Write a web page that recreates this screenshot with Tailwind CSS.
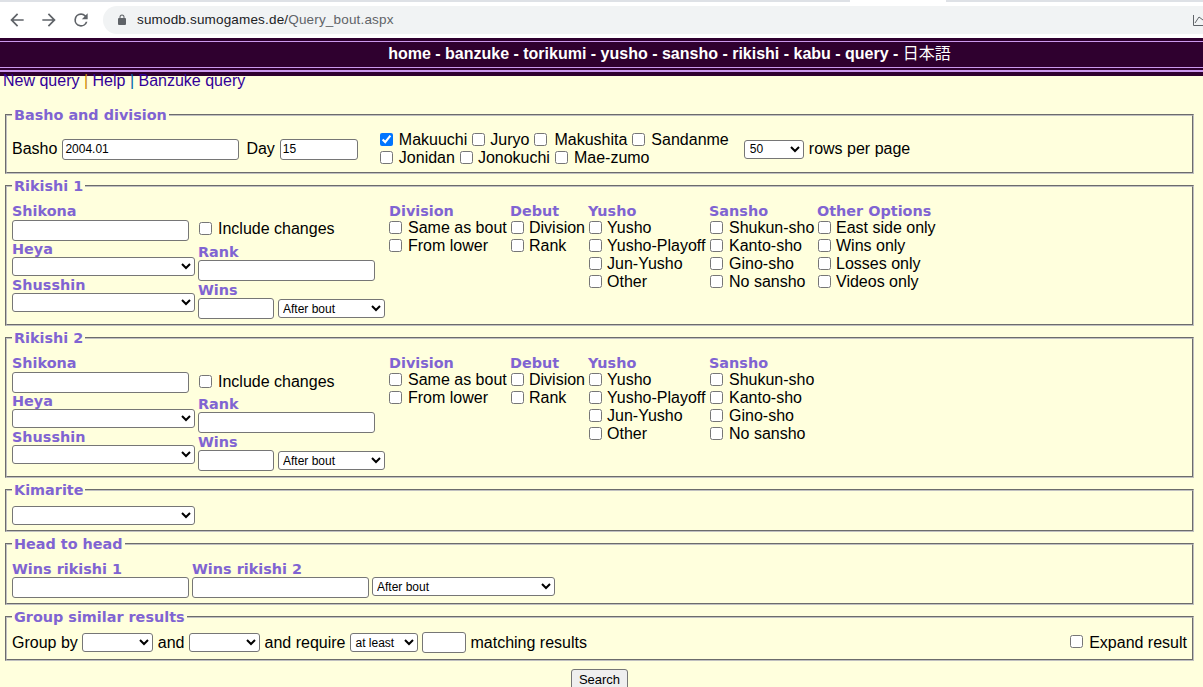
<!DOCTYPE html>
<html lang="en">
<head>
<meta charset="utf-8">
<title>Query bout</title>
<script src="https://cdn.jsdelivr.net/npm/@tailwindcss/browser@4"></script>
</head>
<body class="bg-[#ffffdd] text-black text-base leading-[18px] font-['Liberation_Sans','Noto_Sans_CJK_JP',sans-serif] overflow-hidden h-[687px]">
<div class="h-[38px] bg-white flex flex-col">
  <div class="h-[2px] flex"><div class="w-[850px] bg-[#dee1e6]"></div><div class="w-[96px] bg-white"></div><div class="flex-1 bg-[#dee1e6]"></div></div>
  <div class="flex items-center h-[36px] pb-[3px] pt-[3px]">
    <div class="w-[103px] flex items-center pl-[7px] gap-[12px] text-[#5f6368]">
      <svg class="w-[20px] h-[20px]" viewBox="0 0 24 24" fill="currentColor"><path d="M20 11H7.83l5.59-5.59L12 4l-8 8 8 8 1.41-1.41L7.83 13H20z"/></svg>
      <svg class="w-[20px] h-[20px]" viewBox="0 0 24 24" fill="currentColor"><path d="M12 4l-1.41 1.41L16.17 11H4v2h12.17l-5.58 5.59L12 20l8-8z"/></svg>
      <svg class="w-[20px] h-[20px]" viewBox="0 0 24 24" fill="currentColor"><path d="M17.65 6.35A7.96 7.96 0 0 0 12 4a8 8 0 1 0 7.73 10h-2.08A6 6 0 1 1 12 6c1.66 0 3.14.69 4.22 1.78L13 11h7V4z"/></svg>
    </div>
    <div class="flex-1 h-[28px] bg-[#f1f3f4] rounded-l-[14px] flex items-center pl-[13px] text-[13.5px] tracking-[0.17px]">
      <svg class="w-[12px] h-[12px] text-[#5f6368] mr-[9px]" viewBox="0 0 24 24" fill="currentColor"><path d="M18 8h-1V6a5 5 0 0 0-10 0v2H6a2 2 0 0 0-2 2v10a2 2 0 0 0 2 2h12a2 2 0 0 0 2-2V10a2 2 0 0 0-2-2zM9 6a3 3 0 0 1 6 0v2H9z"/></svg>
      <span class="text-[#202124]">sumodb.sumogames.de/</span><span class="text-[#5f6368]">Query_bout.aspx</span>
      <svg class="w-[10px] h-[14px] ml-auto text-[#5f6368]" viewBox="0 0 10 14" fill="none" stroke="currentColor"><path d="M0.5 2v10.5H10M2 10l4-6 4 3"/></svg>
    </div>
  </div>
</div>
<nav class="h-[38px] bg-[#2f002f] flex flex-col">
  <div class="mt-[3px] h-[1px] bg-[#cc99ee]"></div>
  <div class="h-[25px] pb-[2px] flex items-center justify-center pl-[136px] text-white font-bold text-base"><span>home - banzuke - torikumi - yusho - sansho - rikishi - kabu - query - <span class="font-normal">日本語</span></span></div>
  <div class="h-[1px] bg-[#cc99ee]"></div>
  <div class="mt-[2px] h-[2px] bg-[#cc99ee]"></div>
</nav>
<div class="pl-[3px] h-[33px] -mt-[4px] text-[#330099] leading-[18px] relative mb-[2px]">New query <span class="text-[#cc8800]">|</span> Help <span class="text-[#0066aa]">|</span> Banzuke query</div>

<form class="pl-[5px] pr-[9px] flex flex-col">
  <!-- Basho and division -->
  <fieldset class="border-2 [border-style:groove] border-[#c0c0c0] h-[67px] pl-[5px] pt-0">
    <legend class="px-[2px] font-['DejaVu_Sans',sans-serif] font-bold text-[14.4px] leading-[16px] text-[#8064d2]">Basho and division</legend>
    <div class="flex items-center h-[38px] mt-[7px]">
      <span>Basho</span>
      <input value="2004.01" class="ml-[5px] w-[177px] h-[21px] bg-white border border-[#767676] rounded-[3px] text-xs px-[2px]">
      <span class="ml-[7px]">Day</span>
      <input value="15" class="ml-[5px] w-[78px] h-[21px] bg-white border border-[#767676] rounded-[3px] text-xs px-[2px]">
      <div class="ml-[22px] w-[364px] flex flex-col">
        <div class="flex items-center h-[18px]"><input type="checkbox" checked class="mb-[2px] w-[13px] h-[13px] accent-[#0075ff]"><span class="ml-[6px]">Makuuchi</span><input type="checkbox" class="mb-[2px] ml-[5px] w-[13px] h-[13px]"><span class="ml-[5px]">Juryo</span><input type="checkbox" class="mb-[2px] ml-[5px] w-[13px] h-[13px]"><span class="ml-[7px]">Makushita</span><input type="checkbox" class="mb-[2px] ml-[5px] w-[13px] h-[13px]"><span class="ml-[6px]">Sandanme</span></div>
        <div class="flex items-center h-[18px]"><input type="checkbox" class="mb-[2px] w-[13px] h-[13px]"><span class="ml-[6px]">Jonidan</span><input type="checkbox" class="mb-[2px] ml-[5px] w-[13px] h-[13px]"><span class="ml-[5px]">Jonokuchi</span><input type="checkbox" class="mb-[2px] ml-[5px] w-[13px] h-[13px]"><span class="ml-[6px]">Mae-zumo</span></div>
      </div>
      <select class="w-[60px] h-[19px] bg-white border border-[#767676] rounded-[3px] text-xs pl-[1px]"><option>50</option></select>
      <span class="ml-[5px]">rows per page</span>
    </div>
  </fieldset>

  <!-- Rikishi 1 -->
  <fieldset class="mt-[4px] border-2 [border-style:groove] border-[#c0c0c0] h-[148px] pl-[5px]">
    <legend class="px-[2px] font-['DejaVu_Sans',sans-serif] font-bold text-[14.4px] leading-[16px] text-[#8064d2]">Rikishi 1</legend>
    <div class="flex mt-[7px] font-normal">
      <div class="w-[186px] flex flex-col">
        <div class="h-[16px] mt-[2px] font-['DejaVu_Sans',sans-serif] font-bold text-[14.4px] leading-[16px] text-[#8064d2]">Shikona</div>
        <input class="mt-[1px] w-[177px] h-[21px] bg-white border border-[#767676] rounded-[3px] text-xs">
        <div class="h-[16px] font-['DejaVu_Sans',sans-serif] font-bold text-[14.4px] leading-[16px] text-[#8064d2]">Heya</div>
        <select class="w-[183px] h-[19px] bg-white border border-[#767676] rounded-[3px] text-xs"><option></option></select>
        <div class="h-[16px] mt-[1px] font-['DejaVu_Sans',sans-serif] font-bold text-[14.4px] leading-[16px] text-[#8064d2]">Shusshin</div>
        <select class="w-[183px] h-[19px] bg-white border border-[#767676] rounded-[3px] text-xs"><option></option></select>
      </div>
      <div class="w-[191px] flex flex-col">
        <div class="flex items-center h-[18px] mt-[19px]"><input type="checkbox" class="mb-[2px] ml-px w-[13px] h-[13px]"><span class="ml-[6px]">Include changes</span></div>
        <div class="h-[16px] mt-[6px] font-['DejaVu_Sans',sans-serif] font-bold text-[14.4px] leading-[16px] text-[#8064d2]">Rank</div>
        <input class="w-[177px] h-[21px] bg-white border border-[#767676] rounded-[3px] text-xs">
        <div class="h-[16px] mt-[1px] font-['DejaVu_Sans',sans-serif] font-bold text-[14.4px] leading-[16px] text-[#8064d2]">Wins</div>
        <div class="flex items-center"><input class="w-[76px] h-[21px] bg-white border border-[#767676] rounded-[3px] text-xs"><select class="ml-[4px] w-[107px] h-[19px] bg-white border border-[#767676] rounded-[3px] text-xs"><option>After bout</option></select></div>
      </div>
      <div class="w-[122px] flex flex-col">
        <div class="h-[16px] mt-[2px] font-['DejaVu_Sans',sans-serif] font-bold text-[14.4px] leading-[16px] text-[#8064d2]">Division</div>
        <div class="flex items-center h-[18px]"><input type="checkbox" class="mb-[2px] w-[13px] h-[13px]"><span class="ml-[6px]">Same as bout</span></div>
        <div class="flex items-center h-[18px]"><input type="checkbox" class="mb-[2px] w-[13px] h-[13px]"><span class="ml-[6px]">From lower</span></div>
      </div>
      <div class="w-[78px] flex flex-col">
        <div class="-ml-px h-[16px] mt-[2px] font-['DejaVu_Sans',sans-serif] font-bold text-[14.4px] leading-[16px] text-[#8064d2]">Debut</div>
        <div class="flex items-center h-[18px]"><input type="checkbox" class="mb-[2px] w-[13px] h-[13px]"><span class="ml-[5px]">Division</span></div>
        <div class="flex items-center h-[18px]"><input type="checkbox" class="mb-[2px] w-[13px] h-[13px]"><span class="ml-[5px]">Rank</span></div>
      </div>
      <div class="w-[120px] flex flex-col">
        <div class="-ml-px h-[16px] mt-[2px] font-['DejaVu_Sans',sans-serif] font-bold text-[14.4px] leading-[16px] text-[#8064d2]">Yusho</div>
        <div class="flex items-center h-[18px]"><input type="checkbox" class="mb-[2px] w-[13px] h-[13px]"><span class="ml-[5px]">Yusho</span></div>
        <div class="flex items-center h-[18px]"><input type="checkbox" class="mb-[2px] w-[13px] h-[13px]"><span class="ml-[5px]">Yusho-Playoff</span></div>
        <div class="flex items-center h-[18px]"><input type="checkbox" class="mb-[2px] w-[13px] h-[13px]"><span class="ml-[5px]">Jun-Yusho</span></div>
        <div class="flex items-center h-[18px]"><input type="checkbox" class="mb-[2px] w-[13px] h-[13px]"><span class="ml-[5px]">Other</span></div>
      </div>
      <div class="w-[108px] flex flex-col">
        <div class="h-[16px] mt-[2px] font-['DejaVu_Sans',sans-serif] font-bold text-[14.4px] leading-[16px] text-[#8064d2]">Sansho</div>
        <div class="flex items-center h-[18px]"><input type="checkbox" class="mb-[2px] ml-px w-[13px] h-[13px]"><span class="ml-[6px]">Shukun-sho</span></div>
        <div class="flex items-center h-[18px]"><input type="checkbox" class="mb-[2px] ml-px w-[13px] h-[13px]"><span class="ml-[6px]">Kanto-sho</span></div>
        <div class="flex items-center h-[18px]"><input type="checkbox" class="mb-[2px] ml-px w-[13px] h-[13px]"><span class="ml-[6px]">Gino-sho</span></div>
        <div class="flex items-center h-[18px]"><input type="checkbox" class="mb-[2px] ml-px w-[13px] h-[13px]"><span class="ml-[6px]">No sansho</span></div>
      </div>
      <div class="flex flex-col">
        <div class="h-[16px] mt-[2px] font-['DejaVu_Sans',sans-serif] font-bold text-[14.4px] leading-[16px] text-[#8064d2]">Other Options</div>
        <div class="flex items-center h-[18px]"><input type="checkbox" class="mb-[2px] ml-px w-[13px] h-[13px]"><span class="ml-[5px]">East side only</span></div>
        <div class="flex items-center h-[18px]"><input type="checkbox" class="mb-[2px] ml-px w-[13px] h-[13px]"><span class="ml-[5px]">Wins only</span></div>
        <div class="flex items-center h-[18px]"><input type="checkbox" class="mb-[2px] ml-px w-[13px] h-[13px]"><span class="ml-[5px]">Losses only</span></div>
        <div class="flex items-center h-[18px]"><input type="checkbox" class="mb-[2px] ml-px w-[13px] h-[13px]"><span class="ml-[5px]">Videos only</span></div>
      </div>
    </div>
  </fieldset>

  <!-- Rikishi 2 -->
  <fieldset class="mt-[4px] border-2 [border-style:groove] border-[#c0c0c0] h-[148px] pl-[5px]">
    <legend class="px-[2px] font-['DejaVu_Sans',sans-serif] font-bold text-[14.4px] leading-[16px] text-[#8064d2]">Rikishi 2</legend>
    <div class="flex mt-[7px] font-normal">
      <div class="w-[186px] flex flex-col">
        <div class="h-[16px] mt-[2px] font-['DejaVu_Sans',sans-serif] font-bold text-[14.4px] leading-[16px] text-[#8064d2]">Shikona</div>
        <input class="mt-[1px] w-[177px] h-[21px] bg-white border border-[#767676] rounded-[3px] text-xs">
        <div class="h-[16px] font-['DejaVu_Sans',sans-serif] font-bold text-[14.4px] leading-[16px] text-[#8064d2]">Heya</div>
        <select class="w-[183px] h-[19px] bg-white border border-[#767676] rounded-[3px] text-xs"><option></option></select>
        <div class="h-[16px] mt-[1px] font-['DejaVu_Sans',sans-serif] font-bold text-[14.4px] leading-[16px] text-[#8064d2]">Shusshin</div>
        <select class="w-[183px] h-[19px] bg-white border border-[#767676] rounded-[3px] text-xs"><option></option></select>
      </div>
      <div class="w-[191px] flex flex-col">
        <div class="flex items-center h-[18px] mt-[20px]"><input type="checkbox" class="mb-[2px] ml-px w-[13px] h-[13px]"><span class="ml-[6px]">Include changes</span></div>
        <div class="h-[16px] mt-[5px] font-['DejaVu_Sans',sans-serif] font-bold text-[14.4px] leading-[16px] text-[#8064d2]">Rank</div>
        <input class="w-[177px] h-[21px] bg-white border border-[#767676] rounded-[3px] text-xs">
        <div class="h-[16px] mt-[1px] font-['DejaVu_Sans',sans-serif] font-bold text-[14.4px] leading-[16px] text-[#8064d2]">Wins</div>
        <div class="flex items-center"><input class="w-[76px] h-[21px] bg-white border border-[#767676] rounded-[3px] text-xs"><select class="ml-[4px] w-[107px] h-[19px] bg-white border border-[#767676] rounded-[3px] text-xs"><option>After bout</option></select></div>
      </div>
      <div class="w-[122px] flex flex-col">
        <div class="h-[16px] mt-[2px] font-['DejaVu_Sans',sans-serif] font-bold text-[14.4px] leading-[16px] text-[#8064d2]">Division</div>
        <div class="flex items-center h-[18px]"><input type="checkbox" class="mb-[2px] w-[13px] h-[13px]"><span class="ml-[6px]">Same as bout</span></div>
        <div class="flex items-center h-[18px]"><input type="checkbox" class="mb-[2px] w-[13px] h-[13px]"><span class="ml-[6px]">From lower</span></div>
      </div>
      <div class="w-[78px] flex flex-col">
        <div class="-ml-px h-[16px] mt-[2px] font-['DejaVu_Sans',sans-serif] font-bold text-[14.4px] leading-[16px] text-[#8064d2]">Debut</div>
        <div class="flex items-center h-[18px]"><input type="checkbox" class="mb-[2px] w-[13px] h-[13px]"><span class="ml-[5px]">Division</span></div>
        <div class="flex items-center h-[18px]"><input type="checkbox" class="mb-[2px] w-[13px] h-[13px]"><span class="ml-[5px]">Rank</span></div>
      </div>
      <div class="w-[120px] flex flex-col">
        <div class="-ml-px h-[16px] mt-[2px] font-['DejaVu_Sans',sans-serif] font-bold text-[14.4px] leading-[16px] text-[#8064d2]">Yusho</div>
        <div class="flex items-center h-[18px]"><input type="checkbox" class="mb-[2px] w-[13px] h-[13px]"><span class="ml-[5px]">Yusho</span></div>
        <div class="flex items-center h-[18px]"><input type="checkbox" class="mb-[2px] w-[13px] h-[13px]"><span class="ml-[5px]">Yusho-Playoff</span></div>
        <div class="flex items-center h-[18px]"><input type="checkbox" class="mb-[2px] w-[13px] h-[13px]"><span class="ml-[5px]">Jun-Yusho</span></div>
        <div class="flex items-center h-[18px]"><input type="checkbox" class="mb-[2px] w-[13px] h-[13px]"><span class="ml-[5px]">Other</span></div>
      </div>
      <div class="w-[108px] flex flex-col">
        <div class="h-[16px] mt-[2px] font-['DejaVu_Sans',sans-serif] font-bold text-[14.4px] leading-[16px] text-[#8064d2]">Sansho</div>
        <div class="flex items-center h-[18px]"><input type="checkbox" class="mb-[2px] ml-px w-[13px] h-[13px]"><span class="ml-[6px]">Shukun-sho</span></div>
        <div class="flex items-center h-[18px]"><input type="checkbox" class="mb-[2px] ml-px w-[13px] h-[13px]"><span class="ml-[6px]">Kanto-sho</span></div>
        <div class="flex items-center h-[18px]"><input type="checkbox" class="mb-[2px] ml-px w-[13px] h-[13px]"><span class="ml-[6px]">Gino-sho</span></div>
        <div class="flex items-center h-[18px]"><input type="checkbox" class="mb-[2px] ml-px w-[13px] h-[13px]"><span class="ml-[6px]">No sansho</span></div>
      </div>
    </div>
  </fieldset>

  <!-- Kimarite -->
  <fieldset class="mt-[4px] border-2 [border-style:groove] border-[#c0c0c0] h-[50px] pl-[5px]">
    <legend class="px-[2px] font-['DejaVu_Sans',sans-serif] font-bold text-[14.4px] leading-[16px] text-[#8064d2]">Kimarite</legend>
    <select class="mt-[8px] block w-[183px] h-[19px] bg-white border border-[#767676] rounded-[3px] text-xs"><option></option></select>
  </fieldset>

  <!-- Head to head -->
  <fieldset class="mt-[4px] border-2 [border-style:groove] border-[#c0c0c0] h-[69px] pl-[5px]">
    <legend class="px-[2px] font-['DejaVu_Sans',sans-serif] font-bold text-[14.4px] leading-[16px] text-[#8064d2]">Head to head</legend>
    <div class="flex mt-[9px] gap-[3px]">
      <div class="w-[177px] flex flex-col">
        <div class="h-[16px] font-['DejaVu_Sans',sans-serif] font-bold text-[14.4px] leading-[16px] text-[#8064d2] whitespace-nowrap">Wins rikishi 1</div>
        <input class="w-[177px] h-[21px] bg-white border border-[#767676] rounded-[3px] text-xs">
      </div>
      <div class="w-[177px] flex flex-col">
        <div class="h-[16px] font-['DejaVu_Sans',sans-serif] font-bold text-[14.4px] leading-[16px] text-[#8064d2] whitespace-nowrap">Wins rikishi 2</div>
        <input class="w-[177px] h-[21px] bg-white border border-[#767676] rounded-[3px] text-xs">
      </div>
      <select class="mt-[16px] w-[183px] h-[19px] bg-white border border-[#767676] rounded-[3px] text-xs"><option>After bout</option></select>
    </div>
  </fieldset>

  <!-- Group similar results -->
  <fieldset class="mt-[4px] border-2 [border-style:groove] border-[#c0c0c0] h-[52px] pl-[5px] pr-[5px]">
    <legend class="px-[2px] font-['DejaVu_Sans',sans-serif] font-bold text-[14.4px] leading-[16px] text-[#8064d2]">Group similar results</legend>
    <div class="flex items-center mt-[7px] h-[21px]">
      <span>Group by</span>
      <select class="ml-[4px] w-[71px] h-[19px] bg-white border border-[#767676] rounded-[3px] text-xs"><option></option></select>
      <span class="ml-[5px]">and</span>
      <select class="ml-[4px] w-[71px] h-[19px] bg-white border border-[#767676] rounded-[3px] text-xs"><option></option></select>
      <span class="ml-[5px]">and require</span>
      <select class="ml-[5px] w-[68px] h-[19px] bg-white border border-[#767676] rounded-[3px] text-xs"><option>at least</option></select>
      <input class="ml-[4px] w-[44px] h-[21px] bg-white border border-[#767676] rounded-[3px] text-xs">
      <span class="ml-[4px]">matching results</span>
      <input type="checkbox" class="mb-[2px] ml-auto w-[13px] h-[13px]">
      <span class="ml-[6px]">Expand result</span>
    </div>
  </fieldset>

  <div class="flex justify-center mt-[8px]">
    <button type="button" class="w-[57px] h-[21px] bg-[#efefef] border border-[#767676] rounded-[3px] text-[13px] leading-[18px]">Search</button>
  </div>
</form>
</body>
</html>
